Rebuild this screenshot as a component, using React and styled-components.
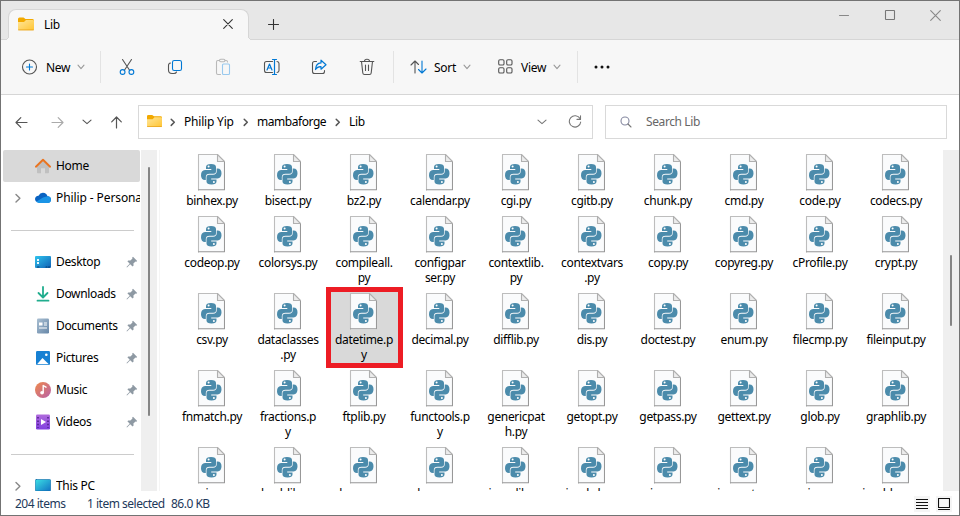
import React from "react";
import styled, { createGlobalStyle, css } from "styled-components";

const GlobalStyle = createGlobalStyle`
  * { box-sizing: border-box; }
  body { margin: 0; overflow: hidden; }
`;

const Window = styled.div`
  width: 960px;
  height: 516px;
  display: flex;
  flex-direction: column;
  border: 1px solid #737373;
  background: #fff;
  color: #000;
  font-family: "Noto Sans", sans-serif;
  font-size: 12px;
  line-height: 16px;
  white-space: nowrap;
  overflow: hidden;
`;

const Label = styled.span`
  letter-spacing: ${(p) => p.$spacing ?? -0.3}px;
`;

/* ---- title bar ---- */
const TitleBar = styled.header`
  flex: none;
  height: 39px;
  display: flex;
  align-items: flex-end;
  background: #e7e7e7;
  box-shadow: inset 0 -1px #d6d6d6;
`;

const Tab = styled.div`
  position: relative;
  width: 241px;
  height: 31px;
  margin-left: 7px;
  padding: 0 15px 3px 9px;
  display: flex;
  align-items: center;
  background: #f7f7f7;
  border: 1px solid #d6d6d6;
  border-bottom: 0;
  border-radius: 8px 8px 0 0;
  & > span { flex: 1; margin-left: 10px; padding-top: 2px; }
  &::before, &::after {
    content: "";
    position: absolute;
    bottom: 0;
    width: 4px;
    height: 4px;
  }
  &::before {
    left: -4px;
    background: radial-gradient(circle at 0 0, #e7e7e7 3px, #d6d6d6 3.2px, #d6d6d6 3.8px, #f7f7f7 4.2px);
  }
  &::after {
    right: -4px;
    background: radial-gradient(circle at 100% 0, #e7e7e7 3px, #d6d6d6 3.2px, #d6d6d6 3.8px, #f7f7f7 4.2px);
  }
`;

const NewTab = styled.div`
  margin-left: 19px;
  height: 31px;
  display: flex;
  align-items: center;
`;

const Controls = styled.div`
  margin: 0 18px 0 auto;
  align-self: flex-start;
  padding-top: 8px;
  display: flex;
  align-items: center;
  gap: 34px;
`;

/* ---- command bar ---- */
const CommandBar = styled.nav`
  flex: none;
  height: 55px;
  display: flex;
  align-items: center;
  padding: 0 0 1px 20px;
  background: #f7f7f7;
  border-bottom: 1px solid #d6d6d6;
`;

const Command = styled.div`
  width: ${(p) => p.$width}px;
  flex: none;
  display: flex;
  align-items: center;
  & > span { margin-left: ${(p) => p.$gap || 9}px; margin-right: 7px; padding-top: 2px; }
`;

const Divider = styled.div`
  width: 1px;
  height: 32px;
  background: #e3e3e3;
  margin-right: ${(p) => p.$after}px;
`;

/* ---- address row ---- */
const AddressRow = styled.div`
  flex: none;
  height: 55px;
  display: flex;
  align-items: center;
  padding: 0 12px 1px 14px;
`;

const NavButton = styled.div`
  width: ${(p) => p.$width}px;
  display: flex;
`;

const Field = styled.div`
  height: 34px;
  width: ${(p) => p.$width}px;
  margin-left: ${(p) => p.$left || 0}px;
  padding-left: ${(p) => p.$indent}px;
  border: 1px solid #d9d9d9;
  display: flex;
  align-items: center;
  color: ${(p) => p.$color || "#000"};
`;

const Crumb = styled.div`
  display: flex;
  align-items: center;
  width: ${(p) => p.$width}px;
  padding-bottom: ${(p) => p.$lift || 0}px;
  & > svg { margin-right: 8px; }
`;

const FieldActions = styled.div`
  margin: 0 10px 0 auto;
  display: flex;
  align-items: center;
  gap: 21px;
`;

/* ---- body ---- */
const Body = styled.div`
  flex: none;
  height: 341px;
  display: flex;
  overflow: hidden;
`;

const Sidebar = styled.aside`
  width: 140px;
  padding-left: 2px;
  overflow: hidden;
`;

const SideItem = styled.div`
  height: 32px;
  width: 137px;
  display: grid;
  grid-template-columns: 32px 21px 1fr 14px;
  align-items: center;
  border-radius: 2px;
  background: ${(p) => (p.$active ? "#d9d9d9" : "transparent")};
  & > span { overflow: hidden; grid-column: ${(p) => (p.$wide ? "3 / 5" : "3")}; }
  & > svg:first-child { margin-left: ${(p) => (p.$expandable ? 12 : 0)}px; }
`;

const SideRule = styled.div`
  height: 32px;
  margin: 0 7px 0 8px;
  display: flex;
  align-items: center;
  &::after { content: ""; flex: 1; height: 1px; background: #ccc; }
`;

const ScrollTrack = styled.div`
  width: 16px;
  flex: none;
  display: flex;
  justify-content: center;
  background: #efefef;
  padding-top: ${(p) => p.$offset}px;
  &::after {
    content: "";
    width: 2px;
    height: ${(p) => p.$thumb}px;
    border-radius: 1px;
    background: #858585;
  }
`;

const FileGrid = styled.main`
  flex: 1;
  margin-left: 2px;
  padding-left: 14px;
  border-left: 1px solid #f5f5f5;
  display: grid;
  grid-template-columns: repeat(10, 76px);
  grid-auto-rows: max-content;
  overflow: hidden;
`;

const FileCell = styled.div`
  position: relative;
  display: flex;
  flex-direction: column;
  align-items: center;
  padding: 4px 0;
  ${(p) => p.$selected && css`
    &::before {
      content: "";
      position: absolute;
      z-index: 0;
      inset: -2px -1px -2px 0;
      border: 5px solid #ed1c24;
      background: #d9d9d9;
    }
    & > * { position: relative; z-index: 1; }
  `}
`;

const PageIcon = styled.div`
  width: 28px;
  height: 37px;
  margin: 0 2px 2px 0;
  display: grid;
  place-items: center;
  & > * { grid-area: 1 / 1; }
  & > svg + svg { margin: 3px 0 0 1px; }
`;

const FileName = styled.div`
  line-height: 15px;
  text-align: center;
  white-space: pre-line;
  letter-spacing: -0.33px;
`;

/* ---- status bar ---- */
const StatusBar = styled.footer`
  flex: 1;
  display: flex;
  align-items: center;
  padding: 1px 7px 0 14px;
  color: #1e395b;
`;

const StatusText = styled.span`
  width: ${(p) => p.$width}px;
  letter-spacing: -0.5px;
`;

const ViewButton = styled.div`
  width: 16px;
  height: 16px;
  margin-left: 6px;
  display: grid;
  place-items: center;
  background: #f5f5f5;
  &:first-of-type { margin-left: auto; }
`;

/* ---- icons ---- */
const Svg = ({ w = 16, h = w, children, color = "#555", ...rest }) => (
  <svg width={w} height={h} viewBox={`0 0 ${w} ${h}`} fill="none" stroke={color} strokeWidth="1.1" strokeLinecap="round" strokeLinejoin="round" {...rest}>
    {children}
  </svg>
);

const BLUE = "#0078d4";

const FolderIcon = () => (
  <Svg w={16} h={14} stroke="none">
    <defs>
      <linearGradient id="folder" x1="0" y1="0" x2="1" y2="1">
        <stop stopColor="#ffe69a" /><stop offset="1" stopColor="#ffc533" />
      </linearGradient>
    </defs>
    <path d="M0 2Q0 .5 1.5.5H5.5L7.5 2H14.5Q16 2 16 3.5V6H0Z" fill="#f2a900" />
    <path d="M0 5H6L8 3H15Q16 3 16 4V12Q16 13.3 14.7 13.3H1.3Q0 13.3 0 12Z" fill="url(#folder)" />
    <path d="M.5 12.9H15.5" stroke="#e8a21a" strokeWidth=".8" />
  </Svg>
);
const ChevronDown = ({ w = 8, color = "#999" }) => (
  <Svg w={w} h={6} color={color}><path d={`M1 1.2L${w / 2} 4.6L${w - 1} 1.2`} /></Svg>
);
const ChevronRight = ({ color = "#555" }) => (
  <Svg w={6} h={10} color={color} strokeWidth="1.5"><path d="M1.2 2.2L4.3 5.3L1.2 8.4" /></Svg>
);
const ExpandIcon = () => (
  <Svg w={6} h={10} color="#888" strokeWidth="1.4"><path d="M1 1.4L4.9 5.2L1 9" /></Svg>
);
const Cross = ({ w = 10, color }) => (
  <Svg w={w} color={color}><path d={`M.7 .7L${w - 0.7} ${w - 0.7}M${w - 0.7} .7L.7 ${w - 0.7}`} /></Svg>
);
const Plus = () => <Svg w={11} color="#333"><path d="M5.5 .5V10.5M.5 5.5H10.5" /></Svg>;
const Minimize = () => <Svg w={12} color="#888"><path d="M1.5 6.5H10.5" /></Svg>;
const Maximize = () => <Svg w={12} color="#777"><rect x="1.5" y="1.5" width="9" height="9" rx=".5" /></Svg>;

const NewIcon = () => (
  <Svg w={17} h={16}><circle cx="8.5" cy="8" r="7" /><path d="M8.5 5V11M5.5 8H11.5" stroke={BLUE} /></Svg>
);
const CutIcon = () => (
  <Svg w={16} h={18}>
    <path d="M3.5 1.5L10.6 12.2M12.5 1.5L5.4 12.2" />
    <circle cx="3.6" cy="14" r="2.4" stroke={BLUE} /><circle cx="12.4" cy="14" r="2.4" stroke={BLUE} />
  </Svg>
);
const CopyIcon = () => (
  <Svg w={16} h={16}>
    <path d="M3.5 4Q1.5 4.2 1.5 6.5V11Q1.5 14.5 5 14.5H7Q9 14.5 9.5 13" />
    <rect x="5.5" y="1.5" width="9" height="10" rx="1.8" stroke={BLUE} />
  </Svg>
);
const PasteIcon = () => (
  <Svg w={16} h={18} color="#b9b9b9">
    <path d="M4 2.5H2.8Q1.5 2.5 1.5 4V15Q1.5 16.5 3 16.5H5.5M10 2.5H11.2Q12.5 2.5 12.5 4" />
    <rect x="4.5" y="1.2" width="5.5" height="2.5" rx="1.2" />
    <rect x="7.5" y="6" width="7" height="10.5" rx="1" stroke="#99c9ee" />
  </Svg>
);
const RenameIcon = () => (
  <Svg w={17} h={18}>
    <path d="M9.5 3.5H3.5Q1.5 3.5 1.5 5.5V12.5Q1.5 14.5 3.5 14.5H9.5M14 3.5Q16 3.7 16 5.5V12.5Q16 14.3 14 14.5" />
    <path d="M4 12L6.5 6L9 12M4.8 10H8.2M11.5 1.5V16.5M9.5 1.5H13.5M9.5 16.5H13.5" stroke={BLUE} strokeWidth="1.2" />
  </Svg>
);
const ShareIcon = () => (
  <Svg w={16} h={16}>
    <path d="M5.5 2.5H3.5Q1.5 2.5 1.5 4.5V12.5Q1.5 14.5 3.5 14.5H11.5Q13.5 14.5 13.5 12.5V11.5" />
    <path d="M10 1.2L15 5.8L10 10.2V7.7Q6.5 7.4 4.5 10.5Q4.8 4.3 10 3.9Z" stroke={BLUE} strokeWidth="1.2" />
  </Svg>
);
const TrashIcon = () => (
  <Svg w={16} h={18}>
    <path d="M1.2 3.5H14.8M5.5 3.3Q5.5 1.3 8 1.3Q10.5 1.3 10.5 3.3M2.5 3.5L3.8 15Q4 16.5 5.5 16.5H10.5Q12 16.5 12.2 15L13.5 3.5M6.5 7V12.5M9.5 7V12.5" />
  </Svg>
);
const SortIcon = () => (
  <Svg w={17} h={14}>
    <path d="M5 13V1M1 5L5 1L8.5 4.5" /><path d="M12 1V13M8.5 9.5L12 13L16 9" stroke={BLUE} />
  </Svg>
);
const ViewIcon = () => (
  <Svg w={15} h={15}>
    {[[1, 1], [9, 1], [1, 9], [9, 9]].map(([x, y]) => <rect key={`${x}${y}`} x={x - 0.3} y={y - 0.3} width="5.3" height="5.3" rx="1.3" />)}
  </Svg>
);
const MoreIcon = () => (
  <Svg w={18} h={4} stroke="none">{[3, 9, 15].map((x) => <circle key={x} cx={x} cy="2" r="1.5" fill="#111" />)}</Svg>
);
const Arrow = ({ turn = 0, color = "#555" }) => (
  <Svg w={13} color={color} strokeWidth="1.2"><path d="M12 6.5H1M5.8 1.7L1 6.5L5.8 11.3" transform={`rotate(${turn} 6.5 6.5)`} /></Svg>
);
const RefreshIcon = () => (
  <Svg w={14} color="#777"><path d="M12 3.6A5.7 5.7 0 1 0 12.7 7M12.5 .8V4.4H9" /></Svg>
);
const SearchIcon = () => (
  <Svg w={12} color="#777"><circle cx="5" cy="5" r="4" stroke="#8588a0" /><path d="M8 8L11 11" /></Svg>
);

const HomeIcon = () => (
  <Svg w={16} h={16} stroke="none">
    <path d="M2 7L8 2L14 7V14.5Q14 15.3 13.2 15.3H10V10.2H6V15.3H2.8Q2 15.3 2 14.5Z" fill="#c0c0c0" />
    <path d="M.9 8.7L8 1.8L15.1 8.7" stroke="#ea7420" strokeWidth="1.9" />
  </Svg>
);
const CloudIcon = () => (
  <Svg w={16} h={12} stroke="none">
    <path d="M4 10.5Q0 10 0 7Q.2 4 3.5 3.8Q5 .7 8 .8Q11.5 1 12.5 4.2Q16 4.6 16 7.7Q15.8 10.6 13 10.8Z" fill="#0a63c2" />
    <path d="M1.2 9.8L8 5.4L12.5 4.2Q16 4.6 16 7.7Q15.8 10.8 13 10.9H4Q2 10.8 1.2 9.8Z" fill="#1a94e6" />
  </Svg>
);
const DesktopIcon = () => (
  <Svg w={16} h={14} stroke="none">
    <defs><linearGradient id="desk" x1="0" y1="0" x2="1" y2="1"><stop stopColor="#2fc4ee" /><stop offset="1" stopColor="#1060b5" /></linearGradient></defs>
    <rect y="1" width="16" height="12" rx="1" fill="url(#desk)" />
    <path d="M2 4H4V6H2ZM2 7H4V9H2Z" fill="#e8fbff" />
    <path d="M2.5 12H4M11 12H12M13.5 12H14.5" stroke="#073d70" />
  </Svg>
);
const DownloadIcon = () => (
  <Svg w={16} h={16} color="#21ad8e" strokeWidth="1.8"><path d="M8 1V11M3.5 7L8 11.5L12.5 7M2.5 14.7H13.5" /></Svg>
);
const DocumentIcon = () => (
  <Svg w={16} h={16} stroke="none">
    <defs><linearGradient id="doc" x1="0" y1="0" x2="1" y2="1"><stop stopColor="#a9bfd2" /><stop offset="1" stopColor="#6787a8" /></linearGradient></defs>
    <rect x="2" y=".5" width="12" height="15" rx="1.3" fill="url(#doc)" />
    <path d="M4 4.5H7.5V7.5H4ZM9 4.5H12V5.5H9ZM9 6.5H12V7.5H9ZM4 9.5H12V10.5H4Z" fill="#fff" />
  </Svg>
);
const PictureIcon = () => (
  <Svg w={16} h={16} stroke="none">
    <rect x="1" y="1" width="14" height="14" rx="1.2" fill="#1680d3" />
    <path d="M2 14.3L7.5 8L13.8 14.3Z" fill="#fff" /><circle cx="11.3" cy="4.7" r="1.3" fill="#fff" />
  </Svg>
);
const MusicIcon = () => (
  <Svg w={16} h={16} stroke="none">
    <defs><linearGradient id="music" x1="0" y1="0" x2="1" y2="1"><stop stopColor="#f08a4b" /><stop offset="1" stopColor="#b860a8" /></linearGradient></defs>
    <circle cx="8" cy="8" r="8" fill="url(#music)" />
    <circle cx="7" cy="10.8" r="1.8" fill="#fff" /><path d="M8.2 10.8V3.5L11 5.2" stroke="#fff" strokeWidth="1.4" />
  </Svg>
);
const VideoIcon = () => (
  <Svg w={16} h={16} stroke="none">
    <defs><linearGradient id="video" x1="0" y1="0" x2="0" y2="1"><stop stopColor="#b06bdc" /><stop offset="1" stopColor="#8140e0" /></linearGradient></defs>
    <rect x="1" y=".5" width="14" height="15" rx="1.3" fill="url(#video)" />
    <path d="M6 5L11 8L6 11Z" fill="#fff" />
    <path d="M3 3V14M13 3V14" stroke="#4b1c85" strokeWidth="1.5" strokeDasharray="1.5 1.9" strokeLinecap="butt" />
  </Svg>
);
const PcIcon = () => (
  <Svg w={16} h={16} stroke="none">
    <rect x=".3" y="1.5" width="15.4" height="11.5" rx="1" fill="url(#pc)" stroke="#0b67a6" strokeWidth=".6" />
    <defs><linearGradient id="pc" x1="0" y1="0" x2="1" y2="1"><stop stopColor="#3be0e4" /><stop offset="1" stopColor="#1273c4" /></linearGradient></defs>
    <path d="M6.5 13.5H9.5V15H6.5Z" fill="#65798c" />
  </Svg>
);
const PinIcon = () => (
  <Svg w={12} h={12} stroke="none">
    <path d="M7 .8L11.2 5L10.3 5.8L9.5 5.5L7.4 7.6L7.6 9.6L6.6 10.5L4.2 8.2L1 11.4L.5 11L3.7 7.7L1.4 5.3L2.3 4.4L4.4 4.6L6.5 2.5L6.1 1.7Z" fill="#8e99a3" />
  </Svg>
);
const PaperIcon = () => (
  <Svg w={28} h={37} stroke="none">
    <path d="M1.5 .5H20.5L27.5 7.5V36.5H1.5Z" fill="#fafbfc" />
    <path d="M20.5 .5H1.5V36" stroke="#bdbdbd" />
    <path d="M27.5 7.5V35.8H1.5" stroke="#989898" />
    <path d="M20.5 .5V7.5H27.5Z" fill="#ececec" stroke="#b0b0b0" />
  </Svg>
);

const SNAKE = "M5 5V3Q5 0 10 0Q15 0 15 3V7.3Q15 9.8 12.5 9.8H8.5Q4.8 9.8 4.8 13.2V16H4Q0 16 0 11.2Q0 6.2 4 6H10.3V5Z";
const PythonMark = () => (
  <Svg w={21} h={21} stroke="none">
    <path d={SNAKE} fill="#4b8bab" />
    <path d={SNAKE} fill="#4b8bab" transform="rotate(180 10.25 10.25)" />
    <circle cx="7.6" cy="2.5" r="1" fill="#fff" />
    <circle cx="12.9" cy="18" r="1" fill="#fff" />
  </Svg>
);

const sideItems = [
  ["Desktop", DesktopIcon],
  ["Downloads", DownloadIcon],
  ["Documents", DocumentIcon],
  ["Pictures", PictureIcon],
  ["Music", MusicIcon],
  ["Videos", VideoIcon],
];

const files = [
  "binhex.py", "bisect.py", "bz2.py", "calendar.py", "cgi.py", "cgitb.py", "chunk.py", "cmd.py", "code.py", "codecs.py",
  "codeop.py", "colorsys.py", "compileall.\npy", "configpar\nser.py", "contextlib.\npy", "contextvars\n.py", "copy.py", "copyreg.py", "cProfile.py", "crypt.py",
  "csv.py", "dataclasses\n.py", "datetime.p\ny", "decimal.py", "difflib.py", "dis.py", "doctest.py", "enum.py", "filecmp.py", "fileinput.py",
  "fnmatch.py", "fractions.p\ny", "ftplib.py", "functools.p\ny", "genericpat\nh.py", "getopt.py", "getpass.py", "gettext.py", "glob.py", "graphlib.py",
  "gzip.py", "hashlib.py", "heapq.py", "hmac.py", "imaplib.py", "imghdr.py", "imp.py", "inspect.py", "io.py", "ipaddress.py",
];

export default function App() {
  return (
    <>
      <GlobalStyle />
      <Window>
        <TitleBar>
          <Tab><FolderIcon /><Label>Lib</Label><Cross w={10} color="#333" /></Tab>
          <NewTab><Plus /></NewTab>
          <Controls><Minimize /><Maximize /><Cross w={11} color="#888" /></Controls>
        </TitleBar>

        <CommandBar>
          <Command $width={79} $gap={8}><NewIcon /><Label>New</Label><ChevronDown /></Command>
          <Divider $after={18} />
          <Command $width={48}><CutIcon /></Command>
          <Command $width={48}><CopyIcon /></Command>
          <Command $width={48}><PasteIcon /></Command>
          <Command $width={48}><RenameIcon /></Command>
          <Command $width={48}><ShareIcon /></Command>
          <Command $width={34}><TrashIcon /></Command>
          <Divider $after={16} />
          <Command $width={88} $gap={7}><SortIcon /><Label>Sort</Label><ChevronDown /></Command>
          <Command $width={79} $gap={8}><ViewIcon /><Label>View</Label><ChevronDown /></Command>
          <Divider $after={15} />
          <MoreIcon />
        </CommandBar>

        <AddressRow>
          <NavButton $width={36}><Arrow /></NavButton>
          <NavButton $width={31}><Arrow turn={180} color="#aaa" /></NavButton>
          <NavButton $width={28}><ChevronDown w={10} color="#555" /></NavButton>
          <NavButton $width={28}><Arrow turn={90} /></NavButton>
          <Field $width={455} $indent={8}>
            <Crumb $width={23} $lift={2}><FolderIcon /></Crumb>
            <Crumb $width={73}><ChevronRight /><Label $spacing={-0.2}>Philip Yip</Label></Crumb>
            <Crumb $width={92}><ChevronRight /><Label $spacing={-0.45}>mambaforge</Label></Crumb>
            <Crumb $width={40}><ChevronRight /><Label>Lib</Label></Crumb>
            <FieldActions><ChevronDown w={10} color="#777" /><RefreshIcon /></FieldActions>
          </Field>
          <Field $width={342} $left={12} $indent={14} $color="#666">
            <NavButton $width={26}><SearchIcon /></NavButton>
            <Label $spacing={-0.4}>Search Lib</Label>
          </Field>
        </AddressRow>

        <Body>
          <Sidebar>
            <SideItem $active><i /><HomeIcon /><Label>Home</Label></SideItem>
            <SideItem $expandable $wide><ExpandIcon /><CloudIcon /><Label $spacing={-0.1}>Philip - Personal</Label></SideItem>
            <SideRule />
            {sideItems.map(([name, Icon]) => (
              <SideItem key={name}><i /><Icon /><Label $spacing={-0.35}>{name}</Label><PinIcon /></SideItem>
            ))}
            <SideRule />
            <SideItem $expandable $wide><ExpandIcon /><PcIcon /><Label>This PC</Label></SideItem>
          </Sidebar>
          <ScrollTrack $offset={17} $thumb={249} />
          <FileGrid>
            {files.map((name) => (
              <FileCell key={name} $selected={name.startsWith("datetime")}>
                <PageIcon><PaperIcon /><PythonMark /></PageIcon>
                <FileName>{name}</FileName>
              </FileCell>
            ))}
          </FileGrid>
          <ScrollTrack $offset={105} $thumb={71} />
        </Body>

        <StatusBar>
          <StatusText $width={72}>204 items</StatusText>
          <StatusText $width={84}>1 item selected</StatusText>
          <StatusText>86.0 KB</StatusText>
          <ViewButton><Svg w={12} color="#111" strokeLinecap="butt"><path d="M0 1.5H12M0 4.5H12M0 7.5H12M0 10.5H12" /></Svg></ViewButton>
          <ViewButton><Svg w={12} color="#111"><path d="M.5 .5H11.5V9.5H.5ZM.5 11.5H11.5" /></Svg></ViewButton>
        </StatusBar>
      </Window>
    </>
  );
}
